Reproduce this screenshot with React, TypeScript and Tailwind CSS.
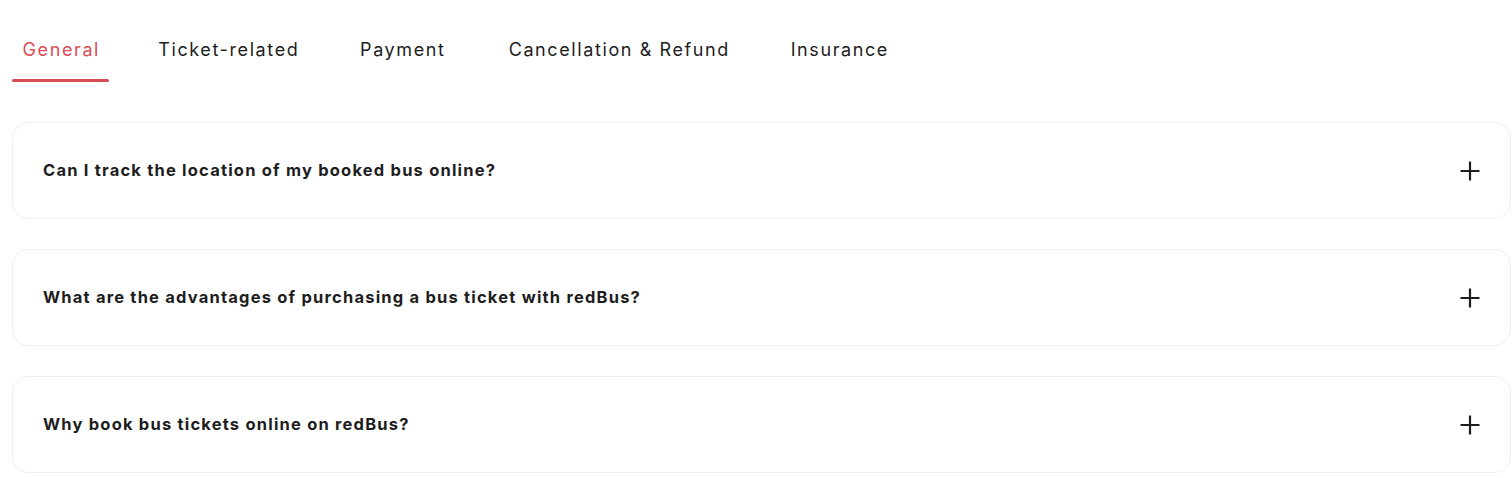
import React from "react";

const tabs = [
  { label: "General", w: "w-[97px]", active: true },
  { label: "Ticket-related", w: "w-[156px]", active: false },
  { label: "Payment", w: "w-[110px]", active: false },
  { label: "Cancellation & Refund", w: "w-[241px]", active: false },
  { label: "Insurance", w: "w-[118px]", active: false },
];

const questions = [
  "Can I track the location of my booked bus online?",
  "What are the advantages of purchasing a bus ticket with redBus?",
  "Why book bus tickets online on redBus?",
];

function Plus() {
  return (
    <svg width="22" height="22" viewBox="0 0 22 22" fill="none">
      <path d="M11 1.5V20.5M1.5 11H20.5" stroke="#1d1d1d" strokeWidth="2.2" />
    </svg>
  );
}

export default function App() {
  return (
    <div className="w-[1512px] h-[478px] bg-white overflow-hidden" style={{ fontFamily: "Inter, 'Noto Sans', sans-serif" }}>
      <div className="flex gap-[41px] pl-[12px] pt-[38px]">
        {tabs.map((t) => (
          <div key={t.label} className={`${t.w} flex flex-col items-center`}>
            <span
              className={`text-[18px] leading-[24px] whitespace-nowrap tracking-[1.6px] pl-[1.6px] ${
                t.active ? "text-[#d84e55]" : "text-[#1d1d1d]"
              }`}
            >
              {t.label}
            </span>
            <div className={`mt-[17px] h-[3px] w-full rounded-full ${t.active ? "bg-[#d84e55]" : "bg-transparent"}`} />
          </div>
        ))}
      </div>
      <div className="mt-[40px] ml-[12px] w-[1499px] flex flex-col gap-[30px]">
        {questions.map((q) => (
          <div
            key={q}
            className="h-[97px] rounded-[16px] border border-[#efeff1] flex items-center justify-between pl-[30px] pr-[29px]"
          >
            <span className="text-[16.5px] leading-[20px] font-bold text-[#1d1d1d] tracking-[1.2px] -mt-[2px]">{q}</span>
            <Plus />
          </div>
        ))}
      </div>
    </div>
  );
}
